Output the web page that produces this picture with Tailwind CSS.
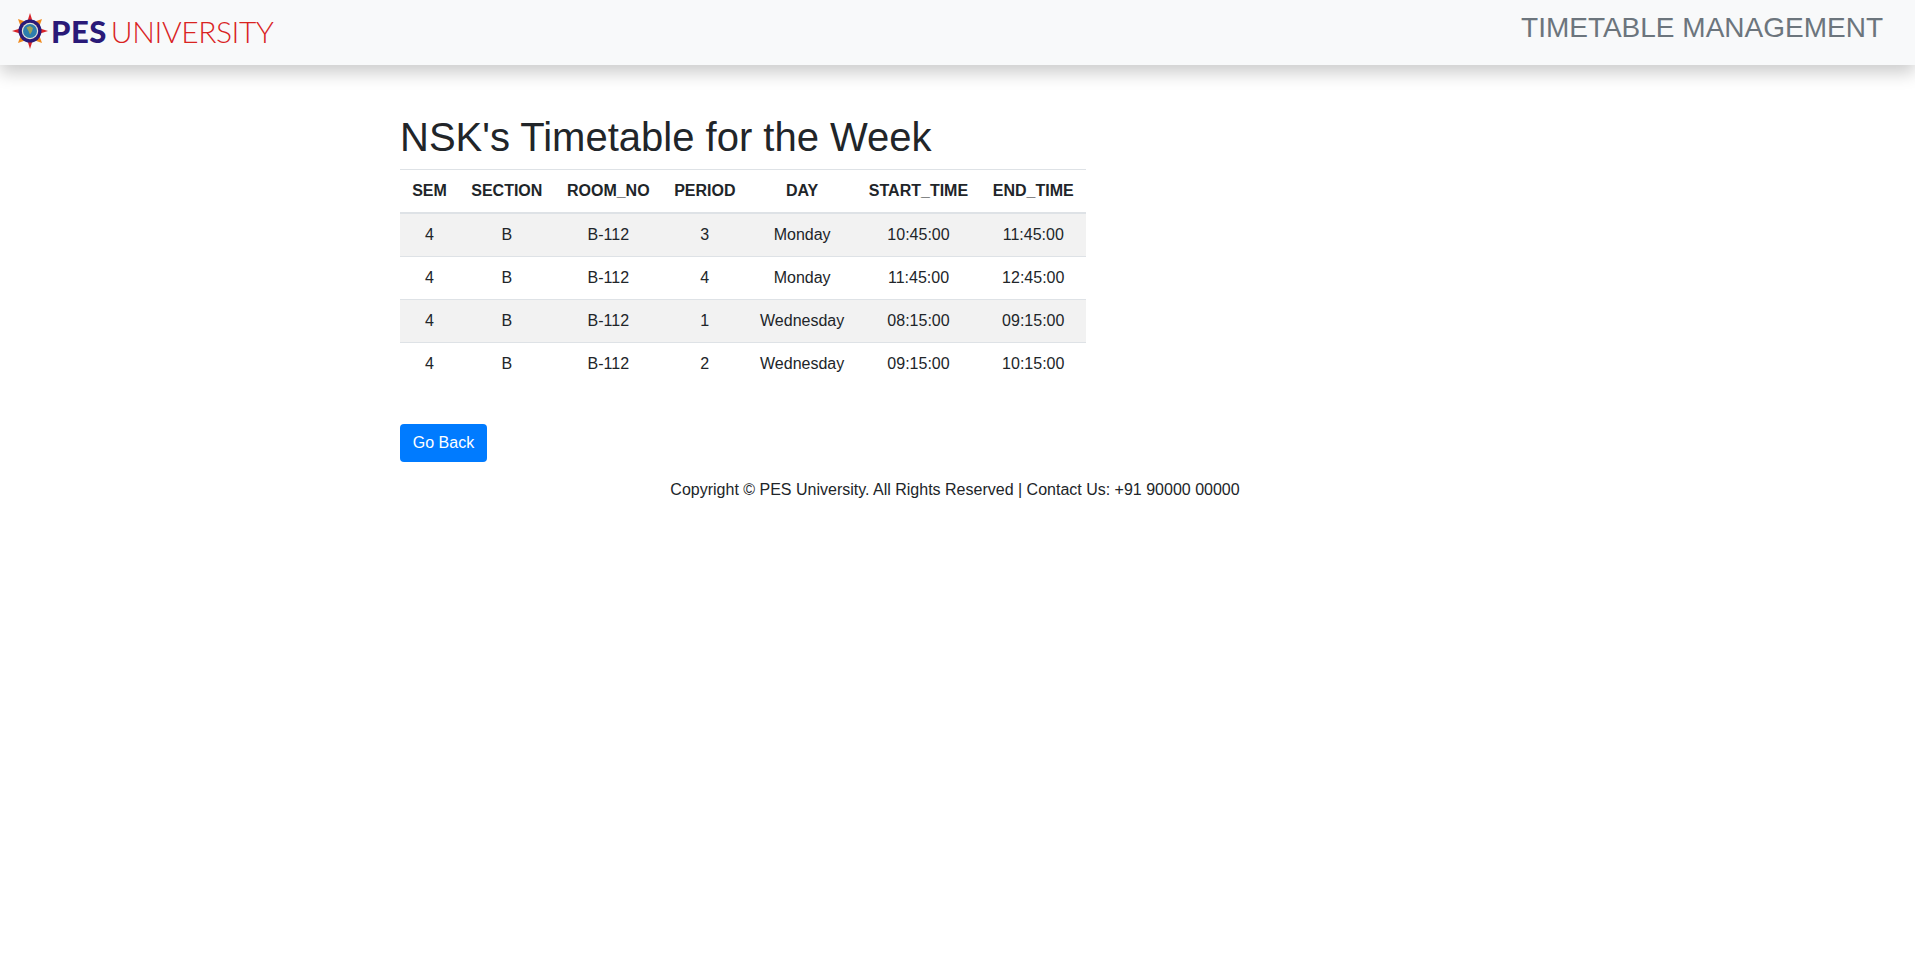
<!DOCTYPE html>
<html lang="en">
<head>
    <meta charset="UTF-8">
    <meta name="viewport" content="width=device-width, initial-scale=1.0">
    <title>Timetable Management</title>
    <script src="https://cdn.jsdelivr.net/npm/@tailwindcss/browser@4"></script>
</head>
<body class="bg-white min-h-screen font-['Liberation_Sans',sans-serif] text-[#212529] text-base">
    <header class="h-[65px] bg-[#f8f9fa] shadow-[0_8px_16px_rgba(0,0,0,0.2)] flex justify-between pl-[12px] pr-[32px]">
        <a href="#" class="flex items-center h-[62px] font-['Lato',sans-serif] select-none">
            <svg class="w-[36px] h-[36px] shrink-0" viewBox="0 0 36 36">
                <polygon points="18,0 20.5,8 15.5,8" fill="#d8232a"/>
                <polygon points="18,36 20.5,28 15.5,28" fill="#d8232a"/>
                <polygon points="0,18 8,15.5 8,20.5" fill="#d8232a"/>
                <polygon points="36,18 28,15.5 28,20.5" fill="#d8232a"/>
                <polygon points="6,6 13,8.5 8.5,13" fill="#f08a1d"/>
                <polygon points="30,6 23,8.5 27.5,13" fill="#f08a1d"/>
                <polygon points="6,30 13,27.5 8.5,23" fill="#f08a1d"/>
                <polygon points="30,30 23,27.5 27.5,23" fill="#f08a1d"/>
                <circle cx="18" cy="18" r="11.5" fill="#2a1a78"/>
                <circle cx="18" cy="18" r="8.2" fill="#e9e4d4"/>
                <circle cx="18" cy="18" r="7" fill="#2e7fae"/>
                <path d="M14.5 14.5l3.5-1.5 3 2-1 3.5-2 3-1.5-3.5z" fill="#9aa25a"/>
            </svg>
            <span class="ml-[3px] font-black text-[31px] leading-none tracking-[0.5px] text-[#2a1a78]">PES</span>
            <span class="ml-[4px] font-light text-[30px] leading-none tracking-[-0.4px] text-[#d9231f]">UNIVERSITY</span>
        </a>
        <div class="pt-[11px] text-[28px] leading-[1.2] text-[#6c757d]">TIMETABLE MANAGEMENT</div>
    </header>

    <main class="w-[1110px] ml-[400px] pt-[48px]">
        <h2 class="text-[40px] leading-[1.2] font-normal mb-[8px]">NSK's Timetable for the Week</h2>

        <table class="text-center border-collapse w-[686px]">
            <thead>
                <tr class="border-t border-[#dee2e6] border-b-2">
                    <th class="px-3 py-[9px] font-bold">SEM</th>
                    <th class="px-3 py-[9px] font-bold">SECTION</th>
                    <th class="px-3 py-[9px] font-bold">ROOM_NO</th>
                    <th class="px-3 py-[9px] font-bold">PERIOD</th>
                    <th class="px-3 py-[9px] font-bold">DAY</th>
                    <th class="px-3 py-[9px] font-bold">START_TIME</th>
                    <th class="px-3 py-[9px] font-bold">END_TIME</th>
                </tr>
            </thead>
            <tbody>
                <tr class="bg-[#f2f2f2] border-t border-[#dee2e6]">
                    <td class="px-3 py-[9px]">4</td><td class="px-3 py-[9px]">B</td><td class="px-3 py-[9px]">B-112</td><td class="px-3 py-[9px]">3</td><td class="px-3 py-[9px]">Monday</td><td class="px-3 py-[9px]">10:45:00</td><td class="px-3 py-[9px]">11:45:00</td>
                </tr>
                <tr class="border-t border-[#dee2e6]">
                    <td class="px-3 py-[9px]">4</td><td class="px-3 py-[9px]">B</td><td class="px-3 py-[9px]">B-112</td><td class="px-3 py-[9px]">4</td><td class="px-3 py-[9px]">Monday</td><td class="px-3 py-[9px]">11:45:00</td><td class="px-3 py-[9px]">12:45:00</td>
                </tr>
                <tr class="bg-[#f2f2f2] border-t border-[#dee2e6]">
                    <td class="px-3 py-[9px]">4</td><td class="px-3 py-[9px]">B</td><td class="px-3 py-[9px]">B-112</td><td class="px-3 py-[9px]">1</td><td class="px-3 py-[9px]">Wednesday</td><td class="px-3 py-[9px]">08:15:00</td><td class="px-3 py-[9px]">09:15:00</td>
                </tr>
                <tr class="border-t border-[#dee2e6]">
                    <td class="px-3 py-[9px]">4</td><td class="px-3 py-[9px]">B</td><td class="px-3 py-[9px]">B-112</td><td class="px-3 py-[9px]">2</td><td class="px-3 py-[9px]">Wednesday</td><td class="px-3 py-[9px]">09:15:00</td><td class="px-3 py-[9px]">10:15:00</td>
                </tr>
            </tbody>
        </table>

        <button type="button" class="mt-[39px] block w-[87px] h-[38px] bg-[#007bff] text-white rounded-[4px]">Go Back</button>

        <footer class="mt-[16px] text-center leading-[24px]">Copyright © PES University. All Rights Reserved | Contact Us: +91 90000 00000</footer>
    </main>
</body>
</html>
